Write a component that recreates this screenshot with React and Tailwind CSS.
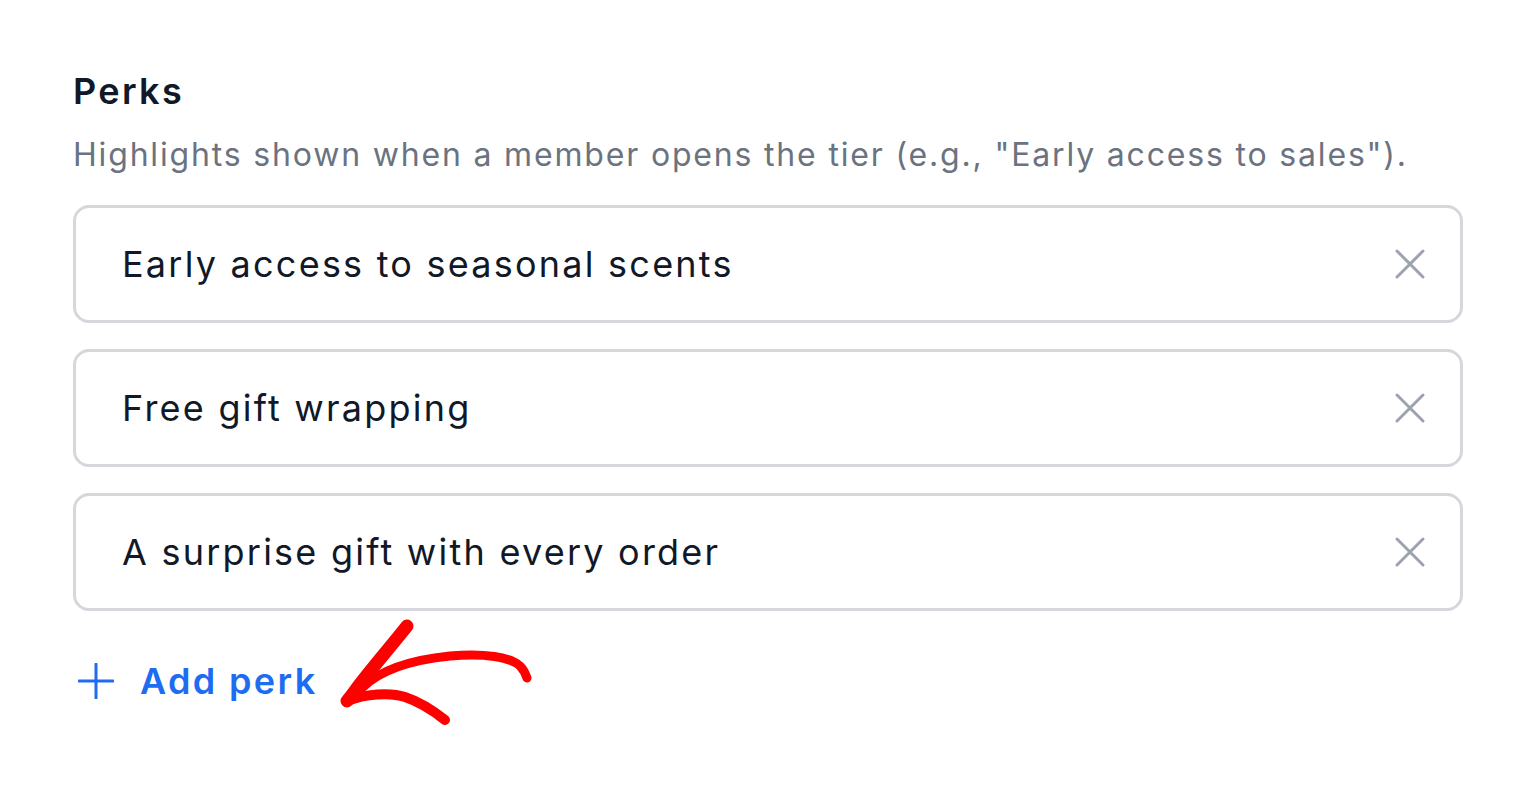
import React from "react";

const perks = [
  "Early access to seasonal scents",
  "Free gift wrapping",
  "A surprise gift with every order",
];

function XIcon() {
  return (
    <svg width="30" height="30" viewBox="0 0 30 30" fill="none" stroke="#9ca3af" strokeWidth="3" strokeLinecap="round">
      <path d="M2 2 L28 28" />
      <path d="M28 2 L2 28" />
    </svg>
  );
}

function PlusIcon() {
  return (
    <svg width="36" height="36" viewBox="0 0 36 36" fill="none" stroke="#1d6cf2" strokeWidth="3" strokeLinecap="round">
      <path d="M18 1 V35" />
      <path d="M1 18 H35" />
    </svg>
  );
}

export default function App() {
  return (
    <div
      className="relative min-h-screen bg-white px-[73px] pt-[67px]"
      style={{ fontFamily: "Inter, 'Noto Sans', sans-serif" }}
    >
      <h2 className="text-[36px] font-semibold leading-[48px] tracking-[0.065em] text-[#111827]">Perks</h2>
      <p className="mt-[16px] text-[32px] leading-[48px] tracking-[0.057em] text-[#6b7280]">
        Highlights shown when a member opens the tier (e.g., "Early access to sales").
      </p>
      <div className="mt-[26px] flex flex-col gap-[26px]">
        {perks.map((p) => (
          <div
            key={p}
            className="flex h-[118px] items-center justify-between rounded-[16px] border-[3px] border-[#d6d6dc] pl-[46px] pr-[35px]"
          >
            <span className="text-[36px] tracking-[0.062em] text-[#111827]">{p}</span>
            <XIcon />
          </div>
        ))}
      </div>
      <div className="mt-[46px] flex h-[48px] items-center gap-[26px] pl-[5px]">
        <PlusIcon />
        <span className="text-[36px] font-semibold leading-[48px] tracking-[0.065em] text-[#1d6cf2]">Add perk</span>
      </div>

      <svg
        className="pointer-events-none absolute left-0 top-0"
        width="1536"
        height="792"
        viewBox="0 0 1536 792"
        fill="none"
        stroke="#ff0000"
        strokeLinecap="round"
        strokeLinejoin="round"
      >
        <path d="M407 626 C392 645 372 668 360 684 C354 692 350 698 347 701" strokeWidth="13" />
        <path d="M362 688 C380 670 410 660 450 656 C485 653 510 657 520 666 C524 670 526 675 527 678" strokeWidth="9" />
        <path d="M347 701 C365 694 390 692 405 697 C420 702 435 712 445 720" strokeWidth="10" />
      </svg>
    </div>
  );
}
